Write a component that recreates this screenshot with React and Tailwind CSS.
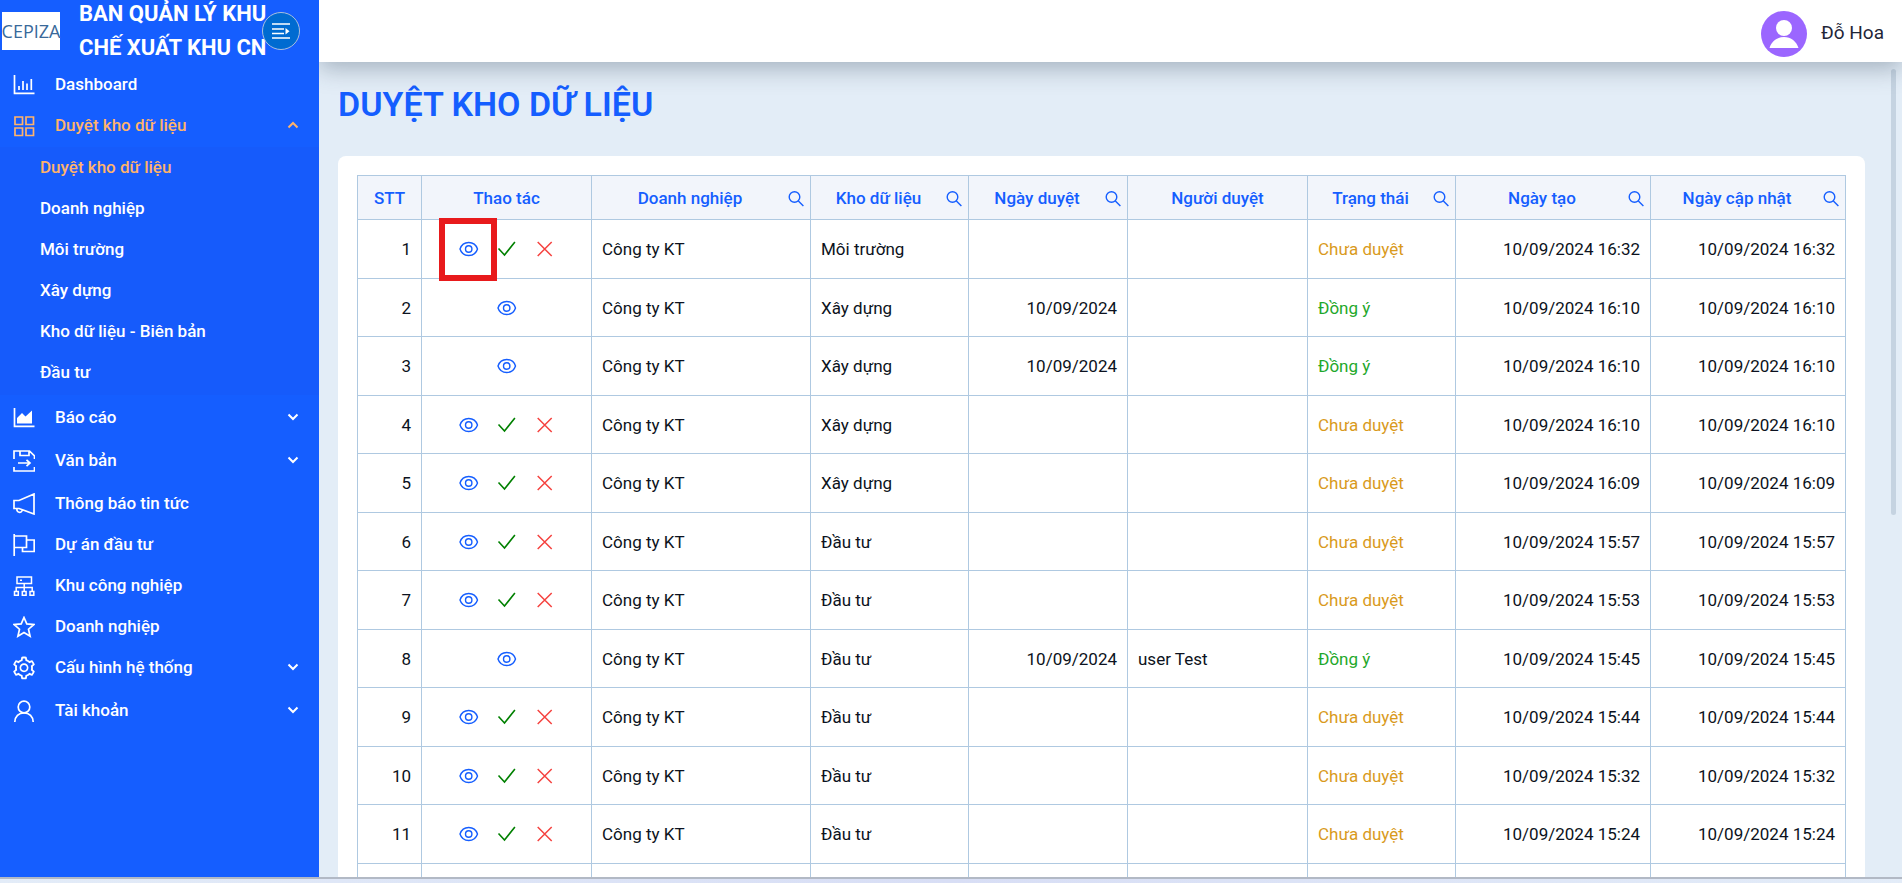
import React from 'react';
import { AiOutlineSetting } from 'react-icons/ai';

const Svg = ({ children, size = 22, ...rest }) => (
  <svg
    width={size}
    height={size}
    viewBox={`0 0 ${size} ${size}`}
    fill="none"
    stroke="currentColor"
    strokeWidth="1.7"
    aria-hidden="true"
    {...rest}
  >
    {children}
  </svg>
);

const BarChartIcon = () => (
  <Svg>
    <path d="M1.5 1v18.3H21.5M6 12v4M10 7v9M14 9.5v6.5M18.3 5v11" />
  </Svg>
);

const GridIcon = () => (
  <Svg>
    <path d="M2 2h7.5v7.5H2zM13 2h7.5v7.5H13zM2 13h7.5v7.5H2zM13 13h7.5v7.5H13z" />
  </Svg>
);

const AreaChartIcon = () => (
  <Svg>
    <path d="M1.5 1v18.3H21.5" />
    <path d="M4 16.5V11l5-5 3.500 3.500L19 3.500v13z" fill="currentColor" stroke="none" />
  </Svg>
);

const SaveIcon = () => (
  <Svg>
    <path d="M1 9V1h15.500l5 5v3M1 17v4h20.500v-4M7 1v4.500h9V1M5 13h12M13.500 9.800L17 13l-3.500 3.200" />
  </Svg>
);

const MegaphoneIcon = () => (
  <Svg>
    <path d="M1 7.500h5L21 1v20L6 15.500H1zM4 16a2.700 2.700 0 1 0 5.300 1" />
  </Svg>
);

const FlagIcon = () => (
  <Svg>
    <path d="M1.200 0v22M1.200 2H13.500v11.500H1.200M13.500 6h7.700v11.500H9.500v-4" />
  </Svg>
);

const NetworkIcon = () => (
  <Svg strokeWidth="1.5">
    <path d="M4 2h14.500v6.500H4zM7 5.300h2M11.200 8.500v8M3.200 16.500v-4h16v4M1.500 16.500h3.800v3.800H1.500zM9.300 16.500h3.800v3.800H9.300zM17 16.500h3.800v3.800H17z" />
  </Svg>
);

const StarIcon = () => (
  <Svg>
    <path d="M11 1.500l2.800 6.400 7 .7-5.300 4.600 1.600 7-6.100-3.600-6.100 3.600 1.600-7L1.200 8.600l7-.7z" />
  </Svg>
);

const GearIcon = () => <AiOutlineSetting size={26} aria-hidden="true" className="-mx-0.5 shrink-0" />;

const UserIcon = () => (
  <Svg>
    <circle cx="11" cy="7" r="5.800" />
    <path d="M1.800 22c0-5.500 4-9.200 9.200-9.200s9.200 3.700 9.200 9.200" />
  </Svg>
);

const ChevronIcon = ({ up }) => (
  <Svg size={12} strokeWidth="2">
    <path d={up ? 'M1.500 7.500L6 3l4.500 4.500' : 'M1.500 2.500L6 7l4.500-4.500'} />
  </Svg>
);

const SearchIcon = () => (
  <Svg size={16} strokeWidth="1.4">
    <circle cx="6.500" cy="6" r="5.300" />
    <path d="M10.400 9.900l5 5" />
  </Svg>
);

const EyeIcon = () => (
  <Svg size={20} strokeWidth="1.4">
    <path d="M1 10C2.300 6 5.500 3.500 9.700 3.500s7.500 2.500 8.800 6.500c-1.300 4-4.600 6.500-8.800 6.500S2.300 14 1 10z" />
    <circle cx="9.700" cy="10" r="3.200" />
  </Svg>
);

const CheckIcon = () => (
  <Svg size={20} strokeWidth="1.600">
    <path d="M1.500 9.500l6 6.500L17.900 3" />
  </Svg>
);

const CrossIcon = () => (
  <Svg size={20} strokeWidth="1.500">
    <path d="M2.700 3l14 14M16.700 3l-14 14" />
  </Svg>
);

const menu = [
  { label: 'Dashboard', icon: BarChartIcon },
  {
    label: 'Duyệt kho dữ liệu',
    icon: GridIcon,
    open: true,
    children: ['Duyệt kho dữ liệu', 'Doanh nghiệp', 'Môi trường', 'Xây dựng', 'Kho dữ liệu - Biên bản', 'Đầu tư'],
  },
  { label: 'Báo cáo', icon: AreaChartIcon, children: [] },
  { label: 'Văn bản', icon: SaveIcon, children: [] },
  { label: 'Thông báo tin tức', icon: MegaphoneIcon },
  { label: 'Dự án đầu tư', icon: FlagIcon },
  { label: 'Khu công nghiệp', icon: NetworkIcon },
  { label: 'Doanh nghiệp', icon: StarIcon },
  { label: 'Cấu hình hệ thống', icon: GearIcon, children: [] },
  { label: 'Tài khoản', icon: UserIcon, children: [] },
];

const columns = [
  { label: 'STT', width: 'w-[64px]' },
  { label: 'Thao tác', width: 'w-[170px]' },
  { label: 'Doanh nghiệp', width: 'w-[219px]', search: true },
  { label: 'Kho dữ liệu', width: 'w-[158px]', search: true },
  { label: 'Ngày duyệt', width: 'w-[159px]', search: true },
  { label: 'Người duyệt', width: 'w-[180px]' },
  { label: 'Trạng thái', width: 'w-[148px]', search: true },
  { label: 'Ngày tạo', width: 'w-[195px]', search: true },
  { label: 'Ngày cập nhật', width: 'w-[195px]', search: true },
];

const rows = [
  { store: 'Môi trường', time: '16:32', highlight: true },
  { store: 'Xây dựng', time: '16:10', approved: '10/09/2024' },
  { store: 'Xây dựng', time: '16:10', approved: '10/09/2024' },
  { store: 'Xây dựng', time: '16:10' },
  { store: 'Xây dựng', time: '16:09' },
  { store: 'Đầu tư', time: '15:57' },
  { store: 'Đầu tư', time: '15:53' },
  { store: 'Đầu tư', time: '15:45', approved: '10/09/2024', approver: 'user Test' },
  { store: 'Đầu tư', time: '15:44' },
  { store: 'Đầu tư', time: '15:32' },
  { store: 'Đầu tư', time: '15:24' },
];

const MenuItem = ({ item }) => {
  const Icon = item.icon;
  const content = (
    <>
      <span className="flex w-[22px] shrink-0 justify-center">
        <Icon />
      </span>
      <span className="flex-1 text-left">{item.label}</span>
    </>
  );

  if (!item.children) {
    return (
      <li>
        <a href="#" className="flex h-[41px] items-center gap-5 pl-[13px]">
          {content}
        </a>
      </li>
    );
  }

  return (
    <li className="pb-[2px]">
      <button
        type="button"
        aria-expanded={Boolean(item.open)}
        className={`flex h-[41px] w-full items-center gap-5 pr-5 pl-[13px] ${item.open ? 'text-[#ffb36b]' : ''}`}
      >
        {content}
        <ChevronIcon up={item.open} />
      </button>
      {item.open && (
        <ul className="mt-px bg-[#165bfb] pb-[2px]">
          {item.children.map((label, i) => (
            <li key={label}>
              <a href="#" className={`flex h-[41px] items-center pl-10 ${i === 0 ? 'text-[#ffb36b]' : ''}`}>
                {label}
              </a>
            </li>
          ))}
        </ul>
      )}
    </li>
  );
};

const Sidebar = () => (
  <aside className="z-20 w-[319px] shrink-0 bg-[#155eff] text-white">
    <div className="relative flex h-[62px] items-center">
      <div className="ml-[2px] flex h-[38px] w-[58px] shrink-0 items-center justify-center bg-white font-['Open_Sans',sans-serif] text-[18px] text-[#39699a]">
        CEPIZA
      </div>
      <p className="ml-[19px] w-[200px] text-[22px] leading-[34px] font-bold">BAN QUẢN LÝ KHU CHẾ XUẤT KHU CN</p>
      <button
        type="button"
        aria-label="Thu gọn menu"
        className="absolute top-3 right-[19px] flex size-[38px] items-center justify-center rounded-full border border-[#a9bfdd] bg-[#006bd1]"
      >
        <Svg size={18} strokeWidth="1.6">
          <path d="M0 2h18M0 7h12M0 11.500h12M0 16h18" />
          <path d="M13.500 6l4 3.200-4 3.200z" fill="currentColor" stroke="none" />
        </Svg>
      </button>
    </div>
    <nav className="pt-[2px] text-[17px] font-medium">
      <ul>
        {menu.map((item) => (
          <MenuItem key={item.label} item={item} />
        ))}
      </ul>
    </nav>
  </aside>
);

const Actions = ({ done, highlight }) => (
  <div className="flex items-center justify-center gap-[18px]">
    <button type="button" aria-label="Xem" className="relative text-[#155eff]">
      <EyeIcon />
      {highlight && (
        <span className="pointer-events-none absolute -top-[21px] -right-[18px] -bottom-[22px] -left-5 border-[6px] border-[#e81a1c]" />
      )}
    </button>
    {!done && (
      <>
        <button type="button" aria-label="Đồng ý" className="text-[#008000]">
          <CheckIcon />
        </button>
        <button type="button" aria-label="Từ chối" className="text-[#f5423f]">
          <CrossIcon />
        </button>
      </>
    )}
  </div>
);

const cell = 'border border-[#afc9e1] px-[10px]';
const textCell = `${cell} pt-[2px]`;

const DataTable = () => (
  <table className="w-full table-fixed border-collapse text-[17px] text-[#0c1220]">
    <thead>
      <tr className="h-[44px] bg-[#f2f5fb] text-[#155eff]">
        {columns.map((col) => (
          <th key={col.label} scope="col" className={`border border-[#afc9e1] p-0 font-medium ${col.width}`}>
            <div className="flex items-center pt-[2px] pr-[6px] pl-[6px] has-[button]:pl-0">
              <span className="flex-1 text-center">{col.label}</span>
              {col.search && (
                <button type="button" aria-label={`Tìm ${col.label}`}>
                  <SearchIcon />
                </button>
              )}
            </div>
          </th>
        ))}
      </tr>
    </thead>
    <tbody>
      {rows.map((row, i) => (
        <tr key={i} className="odd:h-[59px] even:h-[58px]">
          <td className={`${textCell} text-right`}>{i + 1}</td>
          <td className={cell}>
            <Actions done={Boolean(row.approved)} highlight={row.highlight} />
          </td>
          <td className={textCell}>Công ty KT</td>
          <td className={textCell}>{row.store}</td>
          <td className={`${textCell} text-right`}>{row.approved}</td>
          <td className={textCell}>{row.approver}</td>
          <td className={`${textCell} ${row.approved ? 'text-[#1fa82b]' : 'text-[#d99a1c]'}`}>
            {row.approved ? 'Đồng ý' : 'Chưa duyệt'}
          </td>
          <td className={`${textCell} text-right`}>10/09/2024 {row.time}</td>
          <td className={`${textCell} text-right`}>10/09/2024 {row.time}</td>
        </tr>
      ))}
      <tr className="h-[58px]">
        {columns.map((col) => (
          <td key={col.label} className={cell} />
        ))}
      </tr>
    </tbody>
  </table>
);

const App = () => (
  <div className="flex h-screen flex-col overflow-hidden font-[Roboto,sans-serif]">
    <div className="flex min-h-0 flex-1">
      <Sidebar />
      <div className="flex min-w-0 flex-1 flex-col bg-[#e3edf7]">
        <header className="z-10 flex h-[62px] shrink-0 items-center justify-end gap-[14px] bg-white pt-[6px] pr-[18px] shadow-[0_6px_24px_rgba(40,60,80,0.35)]">
          <svg width="46" height="46" viewBox="0 0 46 46" aria-hidden="true">
            <circle cx="23" cy="23" r="23" fill="#9b66ff" />
            <circle cx="23" cy="17" r="8" fill="#fff" />
            <path d="M8.500 37c2-6.500 7.500-11 14.500-11s12.500 4.500 14.500 11z" fill="#fff" />
          </svg>
          <span className="pb-[2px] text-[19px] text-[#1f2638]">Đỗ Hoa</span>
        </header>
        <div className="relative min-h-0 flex-1 overflow-hidden">
          <main className="pr-[37px] pl-[19px]">
            <h1 className="flex h-[94px] items-center pb-[10px] text-[34px] font-semibold text-[#155eff]">
              DUYỆT KHO DỮ LIỆU
            </h1>
            <section className="rounded-t-lg bg-white p-[19px]">
              <DataTable />
            </section>
          </main>
          <div className="absolute top-[7px] right-[6px] h-[446px] w-[5px] rounded-full bg-[#c5d3e1]" />
        </div>
      </div>
    </div>
    <div className="h-[6px] shrink-0 border-t-2 border-[#b2b9c5] bg-linear-to-r from-[#e3ecf8] via-[#d8def5] to-[#e3ecf8]" />
  </div>
);

export default App;
